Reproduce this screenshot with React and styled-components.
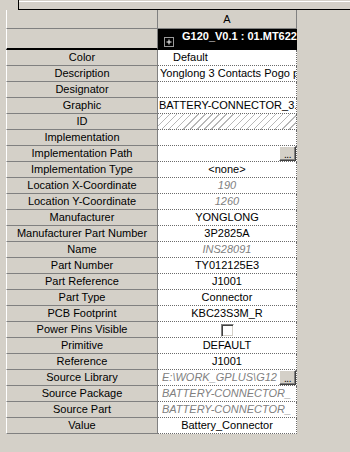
import React from "react";
import styled, { createGlobalStyle } from "styled-components";

const Global = createGlobalStyle`
  html, body {
    margin: 0;
    padding: 0;
    background: #d4d0c8;
  }
  body {
    font-family: "Liberation Sans", Arial, sans-serif;
    font-size: 11px;
    color: #000;
  }
`;

const Page = styled.div`
  width: 350px;
  height: 452px;
  overflow: hidden;
  background: #d4d0c8;
  display: flex;
  flex-direction: column;
`;

const TopStrip = styled.div`
  height: 10px;
  flex: none;
  display: flex;
  padding-left: 18px;
  box-sizing: border-box;
`;

const EditBox = styled.div`
  flex: 1;
  box-sizing: border-box;
  border-left: 1px solid #000;
  border-bottom: 1px solid #000;
  background: linear-gradient(to bottom, #d4d0c8 0 1px, #ffffff 1px 2px, #d4d0c8 2px);
`;

const Table = styled.div`
  margin-left: 6px;
  display: grid;
  grid-template-columns: 152px 139px;
  align-self: flex-start;
`;

const HeadCell = styled.div`
  box-sizing: border-box;
  height: ${(p) => p.$h}px;
  background: #d4d0c8;
  border-left: ${(p) => (p.$first ? "1px solid #ffffff" : "none")};
  border-right: 1px solid #808080;
  border-bottom: ${(p) => (p.$heavy ? "2px solid #000" : "1px solid #808080")};
  text-align: center;
  line-height: ${(p) => p.$h - 1}px;
`;

const GroupCell = styled.div`
  box-sizing: border-box;
  height: 21px;
  background: #000;
  color: #fff;
  display: flex;
  align-items: flex-start;
  padding-left: 6px;
  overflow: hidden;
  white-space: nowrap;
`;

const PlusBox = styled.svg`
  flex: none;
  margin-top: 8px;
  width: 10px;
  height: 10px;
`;

const GroupTitle = styled.span`
  margin-left: 8px;
  font-weight: bold;
  line-height: 15px;
`;

const Label = styled.div`
  box-sizing: border-box;
  height: 16px;
  background: #d4d0c8;
  border-left: 1px solid #ffffff;
  border-right: 1px solid #808080;
  border-bottom: 1px solid #808080;
  text-align: center;
  line-height: 15px;
  white-space: nowrap;
  overflow: hidden;
`;

const ValueCell = styled.div`
  box-sizing: border-box;
  height: 16px;
  background: ${(p) =>
    p.$hatch
      ? "repeating-linear-gradient(135deg, #ffffff 0 3px, #b8b8b8 3px 4px, #ffffff 4px 5px)"
      : "#ffffff"};
  border-right: 1px dotted #6a6a6a;
  border-bottom: 1px dotted #6a6a6a;
  display: flex;
  align-items: stretch;
  overflow: hidden;
`;

const ValueText = styled.span`
  flex: 1;
  min-width: 0;
  overflow: hidden;
  white-space: nowrap;
  line-height: 15px;
  text-align: ${(p) => p.$align || "center"};
  padding-left: ${(p) => p.$pad || 0}px;
  font-style: ${(p) => (p.$dim ? "italic" : "normal")};
  color: ${(p) => (p.$dim ? "#808080" : "#000")};
`;

const DotsButton = styled.div`
  flex: none;
  width: 17px;
  height: 15px;
  box-sizing: border-box;
  background: #d4d0c8;
  border-top: 1px solid #ffffff;
  border-left: 1px solid #ffffff;
  border-right: 1px solid #404040;
  border-bottom: 1px solid #404040;
  box-shadow: inset -1px -1px 0 #808080;
  font-size: 10px;
  line-height: 16px;
  text-align: center;
  color: #000;
  letter-spacing: -0.5px;
`;

const CheckWrap = styled.div`
  flex: 1;
  display: flex;
  justify-content: center;
  padding-top: 2px;
  padding-left: 1px;
`;

const CheckBox = styled.div`
  width: 13px;
  height: 13px;
  box-sizing: border-box;
  background: #fff;
  border-top: 1px solid #808080;
  border-left: 1px solid #808080;
  border-right: 1px solid #ffffff;
  border-bottom: 1px solid #ffffff;
  box-shadow: inset 1px 1px 0 #404040, inset -1px -1px 0 #d4d0c8;
`;

const rows = [
  { label: "Color", value: "Default", align: "left", pad: 15 },
  { label: "Description", value: "Yonglong 3 Contacts Pogo p", align: "left", pad: 2 },
  { label: "Designator" },
  { label: "Graphic", value: "BATTERY-CONNECTOR_3.N", align: "left", pad: 1 },
  { label: "ID", hatch: true },
  { label: "Implementation" },
  { label: "Implementation Path", button: true },
  { label: "Implementation Type", value: "<none>" },
  { label: "Location X-Coordinate", value: "190", dim: true },
  { label: "Location Y-Coordinate", value: "1260", dim: true },
  { label: "Manufacturer", value: "YONGLONG" },
  { label: "Manufacturer Part Number", value: "3P2825A" },
  { label: "Name", value: "INS28091", dim: true },
  { label: "Part Number", value: "TY012125E3" },
  { label: "Part Reference", value: "J1001" },
  { label: "Part Type", value: "Connector" },
  { label: "PCB Footprint", value: "KBC23S3M_R" },
  { label: "Power Pins Visible", checkbox: true },
  { label: "Primitive", value: "DEFAULT" },
  { label: "Reference", value: "J1001" },
  {
    label: "Source Library",
    value: "E:\\WORK_GPLUS\\G12",
    dim: true,
    align: "left",
    pad: 4,
    button: true,
  },
  { label: "Source Package", value: "BATTERY-CONNECTOR_", dim: true, align: "left", pad: 4 },
  { label: "Source Part", value: "BATTERY-CONNECTOR_", dim: true, align: "left", pad: 4 },
  { label: "Value", value: "Battery_Connector" },
];

function Value({ row }) {
  return (
    <ValueCell $hatch={row.hatch}>
      {row.checkbox ? (
        <CheckWrap>
          <CheckBox />
        </CheckWrap>
      ) : (
        <ValueText $align={row.align} $pad={row.pad} $dim={row.dim}>
          {row.value || ""}
        </ValueText>
      )}
      {row.button && <DotsButton>...</DotsButton>}
    </ValueCell>
  );
}

export default function App() {
  return (
    <Page>
      <Global />
      <TopStrip>
        <EditBox />
      </TopStrip>
      <Table>
        <HeadCell $h={19} $first />
        <HeadCell $h={19}>A</HeadCell>
        <HeadCell $h={21} $first $heavy />
        <GroupCell>
          <PlusBox viewBox="0 0 10 10">
            <rect x="0.5" y="0.5" width="9" height="9" fill="#000" stroke="#9a9a9a" />
            <path d="M2.5 5h5M5 2.5v5" stroke="#fff" strokeWidth="1" />
          </PlusBox>
          <GroupTitle>G120_V0.1 : 01.MT622</GroupTitle>
        </GroupCell>
        {rows.map((r) => (
          <React.Fragment key={r.label}>
            <Label>{r.label}</Label>
            <Value row={r} />
          </React.Fragment>
        ))}
      </Table>
    </Page>
  );
}
